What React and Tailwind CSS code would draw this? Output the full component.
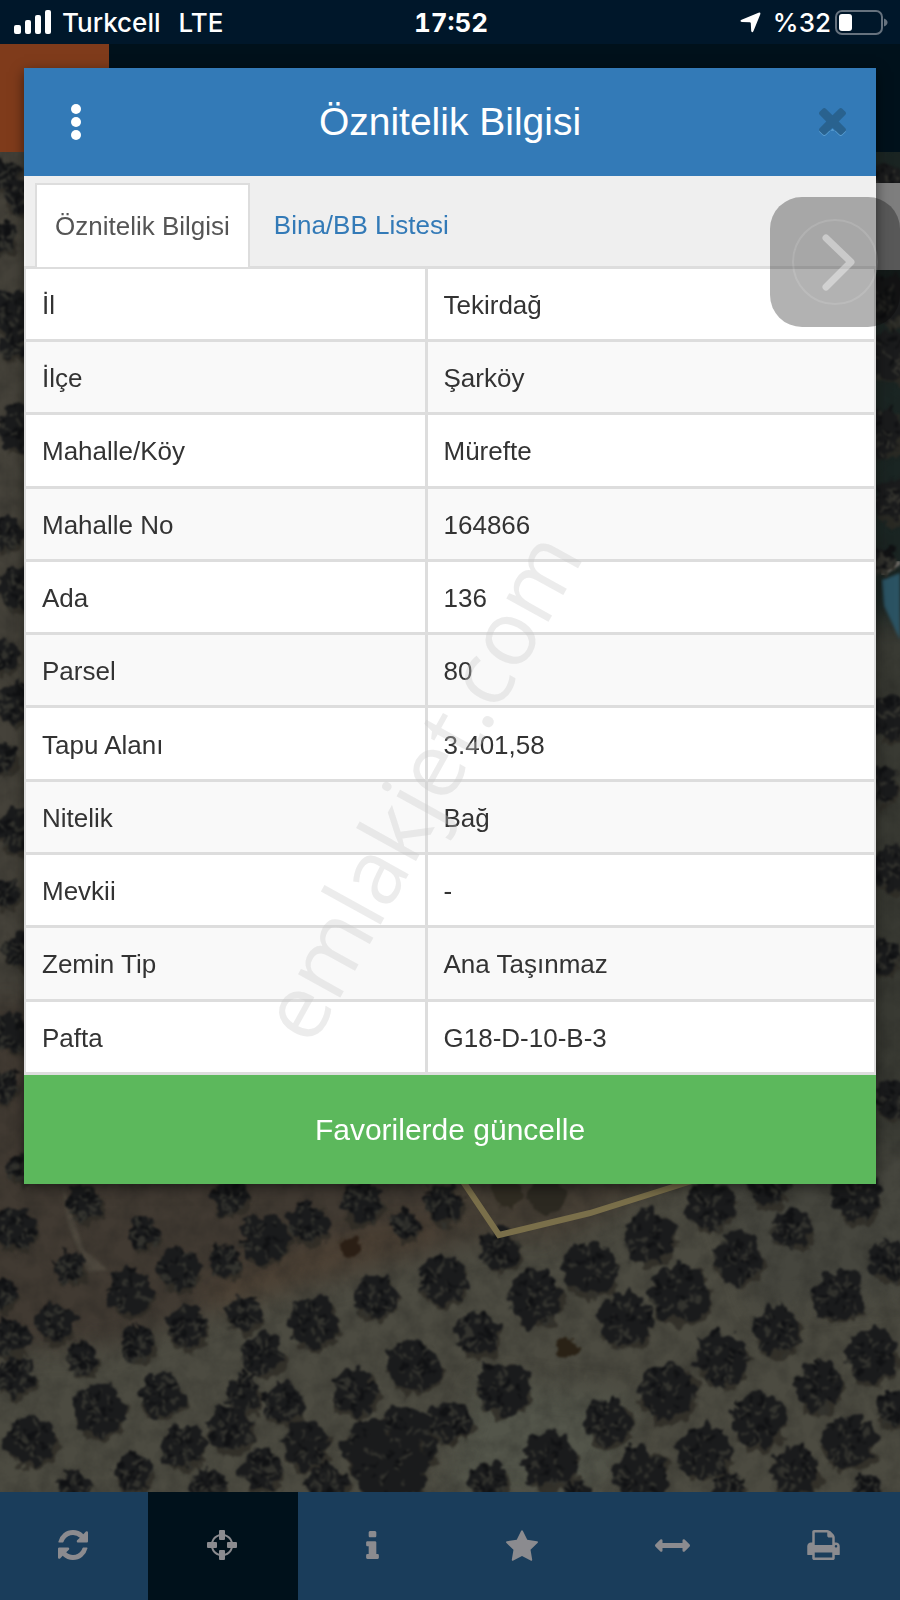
const rows = [
  ['İl', 'Tekirdağ'],
  ['İlçe', 'Şarköy'],
  ['Mahalle/Köy', 'Mürefte'],
  ['Mahalle No', '164866'],
  ['Ada', '136'],
  ['Parsel', '80'],
  ['Tapu Alanı', '3.401,58'],
  ['Nitelik', 'Bağ'],
  ['Mevkii', '-'],
  ['Zemin Tip', 'Ana Taşınmaz'],
  ['Pafta', 'G18-D-10-B-3'],
]

// tree crowns: x, y, radius
const trees = [
  [85, 1202, 18], [15, 1227, 21], [143, 1233, 16], [70, 1267, 15], [230, 1197, 18],
  [264, 1237, 24], [308, 1222, 20], [178, 1268, 21], [225, 1260, 16], [362, 1202, 20],
  [443, 1203, 19], [405, 1225, 14], [2, 1295, 13], [131, 1292, 22], [55, 1322, 19],
  [10, 1337, 19], [82, 1358, 16], [138, 1343, 17], [187, 1326, 20], [243, 1313, 17],
  [313, 1321, 25], [375, 1295, 22], [443, 1281, 24], [262, 1353, 21], [15, 1377, 20],
  [413, 1365, 26], [100, 1411, 26], [162, 1395, 22], [243, 1393, 18], [283, 1403, 21],
  [355, 1391, 23], [230, 1428, 23], [183, 1446, 22], [30, 1440, 24], [305, 1445, 23],
  [372, 1448, 30], [404, 1438, 32], [388, 1466, 38], [447, 1423, 19], [133, 1473, 19],
  [207, 1485, 17], [262, 1470, 21], [75, 1488, 15], [327, 1485, 21], [710, 1205, 24],
  [768, 1186, 20], [857, 1196, 25], [648, 1236, 26], [500, 1250, 20], [792, 1228, 20],
  [738, 1258, 25], [590, 1268, 27], [891, 1260, 21], [535, 1298, 27], [680, 1293, 29],
  [625, 1320, 27], [838, 1295, 25], [477, 1333, 22], [777, 1330, 24], [721, 1358, 27],
  [872, 1355, 27], [503, 1388, 27], [667, 1391, 29], [818, 1387, 24], [455, 1422, 17],
  [757, 1420, 27], [608, 1422, 24], [893, 1408, 17], [848, 1442, 27], [703, 1450, 27],
  [550, 1460, 28], [640, 1475, 28], [795, 1470, 24], [487, 1482, 20], [728, 1488, 15],
  [867, 1487, 13], [577, 1493, 13], [5, 175, 15], [20, 196, 17], [3, 238, 14],
  [10, 312, 22], [17, 342, 17], [22, 428, 25], [4, 532, 18], [20, 588, 22],
  [4, 656, 16], [17, 703, 20], [2, 758, 14], [18, 830, 22], [5, 893, 14],
  [22, 948, 18], [12, 1032, 20], [4, 1085, 15], [24, 1168, 15], [884, 185, 20],
  [888, 300, 24], [893, 356, 26], [880, 432, 24], [895, 500, 20], [882, 560, 12],
  [890, 716, 22], [880, 785, 18], [893, 868, 22], [882, 956, 18], [896, 1098, 20],
]

// small repeatable noise so every crown keeps its shape between renders
const noise = (n) => {
  const v = Math.sin(n * 127.1) * 43758.5453
  return v - Math.floor(v)
}

const crown = (x, y, r, seed) => {
  const pts = []
  for (let i = 0; i < 26; i++) {
    const a = (i / 26) * Math.PI * 2
    const d = r * (0.84 + 0.3 * noise(seed * 31 + i))
    pts.push(`${(x + Math.cos(a) * d).toFixed(1)},${(y + Math.sin(a) * d).toFixed(1)}`)
  }
  return pts.join(' ')
}

const twigs = (x, y, r, seed, count) => {
  let d = ''
  for (let i = 0; i < count; i++) {
    const a = noise(seed * 17 + i) * Math.PI * 2
    const q = r * (0.1 + noise(seed * 7 + i) * 0.75)
    const px = x + Math.cos(a) * q
    const py = y + Math.sin(a) * q
    d += `M${px.toFixed(1)} ${py.toFixed(1)}l${(Math.cos(a) * 5).toFixed(1)} ${(Math.sin(a) * 5).toFixed(1)}`
  }
  return d
}

function SatelliteMap() {
  return (
    <svg
      viewBox="0 152 900 1340"
      preserveAspectRatio="xMidYMid slice"
      className="absolute inset-0 h-full w-full"
      aria-hidden="true"
    >
      <defs>
        <filter id="soft" x="-5%" y="-5%" width="110%" height="110%" colorInterpolationFilters="sRGB">
          <feGaussianBlur stdDeviation="1.5" />
        </filter>
        <filter id="foliage" x="-5%" y="-5%" width="110%" height="110%" colorInterpolationFilters="sRGB">
          <feTurbulence type="fractalNoise" baseFrequency="0.09" numOctaves="2" seed="7" result="n" />
          <feDisplacementMap in="SourceGraphic" in2="n" scale="14" xChannelSelector="R" yChannelSelector="G" />
          <feGaussianBlur stdDeviation="1.3" />
        </filter>
        <filter id="haze" x="-20%" y="-20%" width="140%" height="140%" colorInterpolationFilters="sRGB">
          <feGaussianBlur stdDeviation="12" />
        </filter>
        <filter id="grain" colorInterpolationFilters="sRGB">
          <feTurbulence type="fractalNoise" baseFrequency="0.05" numOctaves="4" seed="4" />
          <feColorMatrix values="0 0 0 0 0.12  0 0 0 0 0.12  0 0 0 0 0.11  0 0 0 1.3 -0.45" />
        </filter>
      </defs>
      <rect y="152" width="900" height="1340" fill="#4c4b41" />
      <g filter="url(#haze)">
        <path d="M-40 100H40V1190H-40z" fill="#45423a" />
        <path d="M860 100H940V620H860z" fill="#1a2523" />
        <path d="M860 620H940V1180H860z" fill="#393a33" />
        <path d="M-40 1000H480V1240L250 1300L110 1345L-40 1350z" fill="#413a32" />
        <path d="M430 1150H730L560 1240L450 1240z" fill="#453e34" />
        <path d="M190 1290L340 1235L440 1215L440 1240L220 1310z" fill="#4d4134" />
        <path d="M700 1150H940V1290L760 1310z" fill="#46463e" />
        <path d="M480 1380L640 1400L600 1492H440z" fill="#53554a" />
      </g>
      <path d="M62 1184L84 1250L108 1270L88 1272L68 1225z" fill="#4f493f" filter="url(#soft)" />
      <rect y="152" width="900" height="1340" filter="url(#grain)" opacity="0.4" />
      <path d="M900 573L882 580L884 606L900 640z" fill="#2b5363" filter="url(#soft)" />
      <path d="M882 574L900 562" stroke="#817c76" strokeWidth="4" filter="url(#soft)" />
      <g filter="url(#foliage)">
        {trees.map(([x, y, r], i) => (
          <g key={i}>
            <polygon points={crown(x + 2, y + 5, r, i + 3)} fill="#2d2b24" opacity="0.8" />
            <polygon points={crown(x, y, r, i + 1)} fill="#1a1b1c" />
            <path d={twigs(x, y + 3, r, i + 1, 22)} stroke="#33332e" strokeWidth="3" />
            <path d={twigs(x, y - 2, r, i + 50, 14)} stroke="#101113" strokeWidth="3" />
          </g>
        ))}
        <polygon points={crown(508, 1195, 15, 5)} fill="#302c22" />
        <polygon points={crown(547, 1196, 18, 8)} fill="#2c2921" />
        <polygon points={crown(350, 1246, 11, 9)} fill="#2b1f15" />
        <polygon points={crown(567, 1348, 11, 12)} fill="#2a2216" />
      </g>
      <path d="M462 1180L499 1235L590 1213L695 1180" fill="none" stroke="#7a6f4a" strokeWidth="6" />
    </svg>
  )
}

function StatusBar() {
  return (
    <div className="grid h-11 grid-cols-3 items-center bg-[#00172a] pl-3.5 pr-3 font-['Inter',sans-serif] text-[26px] font-medium text-white">
      <div className="flex items-center gap-2.5">
        <svg width="38" height="24" viewBox="0 0 38 24" fill="currentColor" aria-hidden="true">
          <rect x="0" y="15" width="7" height="9" rx="2" />
          <rect x="11" y="10" width="6" height="14" rx="2" />
          <rect x="21" y="5" width="6" height="19" rx="2" />
          <rect x="31" y="0" width="6" height="24" rx="2" />
        </svg>
        <span>Turkcell</span>
        <span className="ml-2">LTE</span>
      </div>
      <div className="text-center font-bold tabular-nums">17:52</div>
      <div className="flex items-center justify-end">
        <svg width="21" height="21" viewBox="0 0 21 21" fill="currentColor" className="mr-3" aria-hidden="true">
          <path d="M18.500 0.800Q21 0 20.200 2.400L13.500 19Q12.200 21.500 11.200 19L10.800 11.200Q10.700 10.400 9.800 10.300L1.800 10Q-0.800 9 1.600 7.700z" />
        </svg>
        <span>%32</span>
        <svg width="53" height="25" viewBox="0 0 53 25" className="ml-1" aria-hidden="true">
          <rect x="1" y="1" width="46" height="23" rx="6" fill="none" stroke="#66727e" strokeWidth="2" />
          <rect x="4" y="4" width="13" height="17" rx="3" fill="#fff" />
          <path d="M49 8.500q3.500 1.500 3.500 4t-3.500 4z" fill="#66727e" />
        </svg>
      </div>
    </div>
  )
}

function AttributeDialog() {
  return (
    <section
      role="dialog"
      aria-labelledby="dialog-title"
      className="absolute inset-x-6 top-[68px] bg-white shadow-[0_4px_12px_rgba(0,0,0,0.5)]"
    >
      <header className="flex h-[108px] items-center justify-between bg-[#337ab7] px-7">
        <button type="button" aria-label="Menü" className="flex w-12 justify-center text-white">
          <svg width="10" height="36" viewBox="0 0 10 36" fill="currentColor">
            <circle cx="5" cy="5" r="5" />
            <circle cx="5" cy="18" r="5" />
            <circle cx="5" cy="31" r="5" />
          </svg>
        </button>
        <h1 id="dialog-title" className="pb-0.5 text-[39px] leading-none text-white">Öznitelik Bilgisi</h1>
        <button type="button" aria-label="Kapat" className="flex w-12 justify-end pr-0.5 text-[#29628f]">
          <svg width="27" height="28" viewBox="0 0 1188 1232">
            <path
              d="M1188 1000q0 40-28 68l-136 136q-28 28-68 28t-68-28L594 910l-294 294q-28 28-68 28t-68-28L28 1068q-28-28-28-68z"
              fill="#5b9fd2"
            />
            <path
              d="M300 330H888V900H300z"
              fill="#337ab7"
            />
            <path
              d="M1188 956q0 40-28 68l-136 136q-28 28-68 28t-68-28L594 866l-294 294q-28 28-68 28t-68-28L28 1024q-28-28-28-68t28-68l294-294L28 300Q0 272 0 232t28-68L164 28Q192 0 232 0t68 28l294 294L888 28q28-28 68-28t68 28l136 136q28 28 28 68t-28 68L866 594l294 294q28 28 28 68z"
              fill="currentColor"
            />
          </svg>
        </button>
      </header>

      <div role="tablist" className="flex border-b border-[#ddd] bg-[#efefef] pl-[11px] pt-[7px] text-[26px]">
        <button
          type="button"
          role="tab"
          aria-selected="true"
          className="-mb-px h-[84px] border-2 border-b-0 border-[#ddd] bg-white px-[18px] text-[#555]"
        >
          Öznitelik Bilgisi
        </button>
        <button type="button" role="tab" aria-selected="false" className="px-6 pt-0.5 text-[#337ab7]">
          Bina/BB Listesi
        </button>
      </div>

      <table className="h-[808px] w-full border-collapse border-t-2 border-[#ddd] text-left text-[26px] leading-9 text-[#333]">
        <tbody>
          {rows.map(([label, value]) => (
            <tr key={label} className="border-b-3 border-[#ddd] odd:bg-white even:bg-[#f9f9f9]">
              <th scope="row" className="w-[401px] border-l-2 border-r-3 border-[#ddd] pl-4 pt-0.5 font-normal">{label}</th>
              <td className="border-r-2 border-[#ddd] pl-4 pt-0.5">{value}</td>
            </tr>
          ))}
        </tbody>
      </table>

      <button type="button" className="block h-[109px] w-full bg-[#5cb85c] text-[30px] text-white">
        Favorilerde güncelle
      </button>

      {/* Watermark */}
      <div className="pointer-events-none absolute left-[394px] top-[717px] -translate-x-1/2 -translate-y-1/2 -rotate-61 whitespace-nowrap font-['Open_Sans',sans-serif] text-[90px] leading-none text-[rgba(200,200,200,0.35)]">
        emlakjet.com
      </div>
    </section>
  )
}

const tools = [
  {
    label: 'Yenile',
    width: 30,
    height: 30,
    box: '0 0 1536 1536',
    d: 'M1511 928q0 5-1 7-64 268-268 434.500T764 1536q-146 0-282.500-55T238 1324l-129 129q-19 19-45 19t-45-19-19-45V960q0-26 19-45t45-19h448q26 0 45 19t19 45-19 45l-137 137q71 66 161 102t187 36q134 0 250-65t186-179q11-17 53-117 8-23 30-23h192q13 0 22.500 9.500t9.500 22.500zm25-800v448q0 26-19 45t-45 19h-448q-26 0-45-19t-19-45 19-45l138-138Q969 256 768 256q-134 0-250 65T332 500q-11 17-53 117-8 23-30 23H50q-13 0-22.500-9.500T18 608v-7q65-268 270-434.500T768 0q146 0 284 55.500T1297 212l130-129q19-19 45-19t45 19 19 45z',
  },
  {
    label: 'Konum',
    width: 30,
    height: 30,
    box: '0 0 30 30',
    active: true,
    d: 'M13 0h4q1 0 1 1v3.200A11.300 11.300 0 0 1 25.800 12H29q1 0 1 1v4q0 1-1 1h-3.200A11.300 11.300 0 0 1 18 25.800V29q0 1-1 1h-4q-1 0-1-1v-3.200A11.300 11.300 0 0 1 4.200 18H1q-1 0-1-1v-4q0-1 1-1h3.200A11.300 11.300 0 0 1 12 4.200V1q0-1 1-1zM12 6.300A9.200 9.200 0 0 0 6.300 12H9q1 0 1 1v4q0 1-1 1H6.300A9.200 9.200 0 0 0 12 23.700V21q0-1 1-1h4q1 0 1 1v2.700A9.200 9.200 0 0 0 23.700 18H21q-1 0-1-1v-4q0-1 1-1h2.700A9.200 9.200 0 0 0 18 6.300V9q0 1-1 1h-4q-1 0-1-1z',
  },
  {
    label: 'Bilgi',
    width: 13,
    height: 28,
    box: '0 0 640 1408',
    d: 'M640 1216v128q0 26-19 45t-45 19H64q-26 0-45-19t-19-45v-128q0-26 19-45t45-19h64V768H64q-26 0-45-19T0 704V576q0-26 19-45t45-19h384q26 0 45 19t19 45v576h64q26 0 45 19t19 45zM512 64v192q0 26-19 45t-45 19H192q-26 0-45-19t-19-45V64q0-26 19-45t45-19h256q26 0 45 19t19 45z',
  },
  {
    label: 'Favoriler',
    width: 32,
    height: 31,
    box: '0 0 1664 1587',
    d: 'M1664 615q0 22-26 48l-363 354 86 500q1 7 1 20 0 21-10.500 35.500T1321 1587q-19 0-40-12l-449-236-449 236q-22 12-40 12-21 0-31.500-14.500T301 1537q0-6 2-20l86-500L25 663Q0 636 0 615q0-37 56-46l502-73L783 41q19-41 49-41t49 41l225 455 502 73q56 9 56 46z',
  },
  {
    label: 'Ölçüm',
    width: 35,
    height: 13,
    box: '0 0 1792 640',
    d: 'M1792 320q0 26-19 45l-256 256q-19 19-45 19t-45-19-19-45V448H384v128q0 26-19 45t-45 19-45-19L19 365Q0 346 0 320t19-45L275 19q19-19 45-19t45 19 19 45v128h1024V64q0-26 19-45t45-19 45 19l256 256q19 19 19 45z',
  },
  {
    label: 'Yazdır',
    width: 33,
    height: 30,
    box: '0 128 1664 1536',
    d: 'M384 1536h896v-256H384v256zm0-640h896V512h-160q-40 0-68-28t-28-68V256H384v640zm1152 64q0-26-19-45t-45-19-45 19-19 45 19 45 45 19 45-19 19-45zm128 0v416q0 13-9.500 22.500t-22.500 9.500h-224v160q0 40-28 68t-68 28H352q-40 0-68-28t-28-68v-160H32q-13 0-22.500-9.500T0 1376V960q0-79 56.500-135.500T192 768h64V224q0-40 28-68t68-28h672q40 0 88 20t76 48l152 152q28 28 48 76t20 88v256h64q79 0 135.500 56.500T1664 960z',
  },
]

function Toolbar() {
  return (
    <nav className="grid h-[108px] grid-cols-[148fr_150fr_150fr_150fr_150fr_152fr] bg-[#1a3d5b] text-[#8b8b8f]">
      {tools.map((tool) => (
        <button
          key={tool.label}
          type="button"
          aria-label={tool.label}
          className={`flex items-center justify-center pb-0.5 pr-0.5 ${tool.active ? 'bg-[#00111b]' : ''}`}
        >
          <svg width={tool.width} height={tool.height} viewBox={tool.box} fill="currentColor" fillRule="evenodd">
            <path d={tool.d} />
          </svg>
        </button>
      ))}
    </nav>
  )
}

export default function App() {
  return (
    <div className="relative flex min-h-screen flex-col overflow-hidden bg-[#00111b] font-['Liberation_Sans',Arial,sans-serif]">
      <StatusBar />
      <div className="flex h-[108px] bg-[#00111b]">
        <div className="w-[109px] bg-[#7f3b1b]" />
      </div>
      <main className="relative min-h-[1340px] flex-1">
        <SatelliteMap />
        <div className="absolute right-0 top-[31px] h-[87px] w-12 bg-[#7e7e7e]" />
      </main>
      <Toolbar />

      <AttributeDialog />

      {/* Floating assistive button */}
      <button
        type="button"
        aria-label="İleri"
        className="absolute right-0 top-[197px] h-[130px] w-[130px] rounded-[32px] bg-black/30"
      >
        <svg viewBox="0 0 130 130" fill="none" stroke="#fff">
          <circle cx="65" cy="65" r="42" strokeWidth="2" strokeOpacity="0.12" />
          <path d="M56 41L81 65L56 90" strokeWidth="7" strokeLinecap="round" strokeLinejoin="round" strokeOpacity="0.4" />
        </svg>
      </button>
    </div>
  )
}
